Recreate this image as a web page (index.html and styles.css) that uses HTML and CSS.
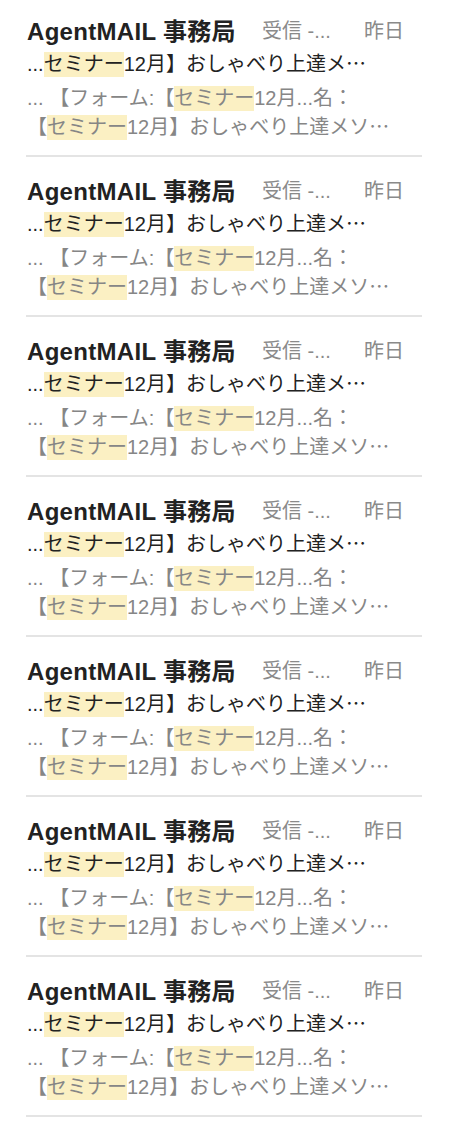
FILE: index.html
```html
<!DOCTYPE html>
<html lang="ja">
<head>
  <meta charset="UTF-8" />
  <meta name="viewport" content="width=device-width, initial-scale=1.0"/>
  <title>検索結果 - セミナー</title>
  <link rel="stylesheet" href="styles.css">
</head>
<body>
  <ul class="mail-list">
    <li class="mail-item">
      <div class="mail-head">
        <span class="sender">AgentMAIL 事務局</span>
        <span class="folder">受信 -...</span>
        <span class="date">昨日</span>
      </div>
      <div class="subject">...<mark>セミナー</mark>12月】おしゃべり上達メ<span class="jp">…</span></div>
      <div class="preview">... 【フォーム:【<mark>セミナー</mark>12月...名：</div>
      <div class="preview">【<mark>セミナー</mark>12月】おしゃべり上達メソ<span class="jp">…</span></div>
    </li>
    <li class="mail-item">
      <div class="mail-head">
        <span class="sender">AgentMAIL 事務局</span>
        <span class="folder">受信 -...</span>
        <span class="date">昨日</span>
      </div>
      <div class="subject">...<mark>セミナー</mark>12月】おしゃべり上達メ<span class="jp">…</span></div>
      <div class="preview">... 【フォーム:【<mark>セミナー</mark>12月...名：</div>
      <div class="preview">【<mark>セミナー</mark>12月】おしゃべり上達メソ<span class="jp">…</span></div>
    </li>
    <li class="mail-item">
      <div class="mail-head">
        <span class="sender">AgentMAIL 事務局</span>
        <span class="folder">受信 -...</span>
        <span class="date">昨日</span>
      </div>
      <div class="subject">...<mark>セミナー</mark>12月】おしゃべり上達メ<span class="jp">…</span></div>
      <div class="preview">... 【フォーム:【<mark>セミナー</mark>12月...名：</div>
      <div class="preview">【<mark>セミナー</mark>12月】おしゃべり上達メソ<span class="jp">…</span></div>
    </li>
    <li class="mail-item">
      <div class="mail-head">
        <span class="sender">AgentMAIL 事務局</span>
        <span class="folder">受信 -...</span>
        <span class="date">昨日</span>
      </div>
      <div class="subject">...<mark>セミナー</mark>12月】おしゃべり上達メ<span class="jp">…</span></div>
      <div class="preview">... 【フォーム:【<mark>セミナー</mark>12月...名：</div>
      <div class="preview">【<mark>セミナー</mark>12月】おしゃべり上達メソ<span class="jp">…</span></div>
    </li>
    <li class="mail-item">
      <div class="mail-head">
        <span class="sender">AgentMAIL 事務局</span>
        <span class="folder">受信 -...</span>
        <span class="date">昨日</span>
      </div>
      <div class="subject">...<mark>セミナー</mark>12月】おしゃべり上達メ<span class="jp">…</span></div>
      <div class="preview">... 【フォーム:【<mark>セミナー</mark>12月...名：</div>
      <div class="preview">【<mark>セミナー</mark>12月】おしゃべり上達メソ<span class="jp">…</span></div>
    </li>
    <li class="mail-item">
      <div class="mail-head">
        <span class="sender">AgentMAIL 事務局</span>
        <span class="folder">受信 -...</span>
        <span class="date">昨日</span>
      </div>
      <div class="subject">...<mark>セミナー</mark>12月】おしゃべり上達メ<span class="jp">…</span></div>
      <div class="preview">... 【フォーム:【<mark>セミナー</mark>12月...名：</div>
      <div class="preview">【<mark>セミナー</mark>12月】おしゃべり上達メソ<span class="jp">…</span></div>
    </li>
    <li class="mail-item">
      <div class="mail-head">
        <span class="sender">AgentMAIL 事務局</span>
        <span class="folder">受信 -...</span>
        <span class="date">昨日</span>
      </div>
      <div class="subject">...<mark>セミナー</mark>12月】おしゃべり上達メ<span class="jp">…</span></div>
      <div class="preview">... 【フォーム:【<mark>セミナー</mark>12月...名：</div>
      <div class="preview">【<mark>セミナー</mark>12月】おしゃべり上達メソ<span class="jp">…</span></div>
    </li>
  </ul>
</body>
</html>
```

FILE: styles.css
```css
body {
  font-family: 'Liberation Sans', 'Noto Sans CJK JP', sans-serif;
  margin: 0;
  background: #ffffff;
  color: #222222;
}
.mail-list {
  list-style: none;
  margin: 0;
  padding: 0 30px 0 26px;
}
.mail-item {
  padding: 12px 0 15px 1px;
  margin-bottom: 3px;
  border-bottom: 2px solid #e4e4e4;
}
.mail-head {
  display: grid;
  grid-template-columns: 235px 1fr auto;
  align-items: center;
  height: 28px;
  padding-right: 18px;
  white-space: nowrap;
}
.sender {
  font-size: 24px;
  font-weight: bold;
  letter-spacing: 0.3px;
  color: #222222;
}
.folder, .date {
  font-size: 20px;
  color: #8a8a8a;
}
.subject {
  margin-top: 9px;
  height: 28px;
  font-size: 20px;
  line-height: 28px;
  white-space: nowrap;
}
.preview {
  height: 28px;
  font-size: 20px;
  line-height: 28px;
  color: #868686;
  white-space: nowrap;
}
.subject + .preview {
  margin-top: 7px;
}
.jp {
  font-family: 'Noto Sans CJK JP', sans-serif;
}
mark {
  display: inline-block;
  line-height: 25px;
  background: #fbf0c3;
  color: inherit;
}
```
